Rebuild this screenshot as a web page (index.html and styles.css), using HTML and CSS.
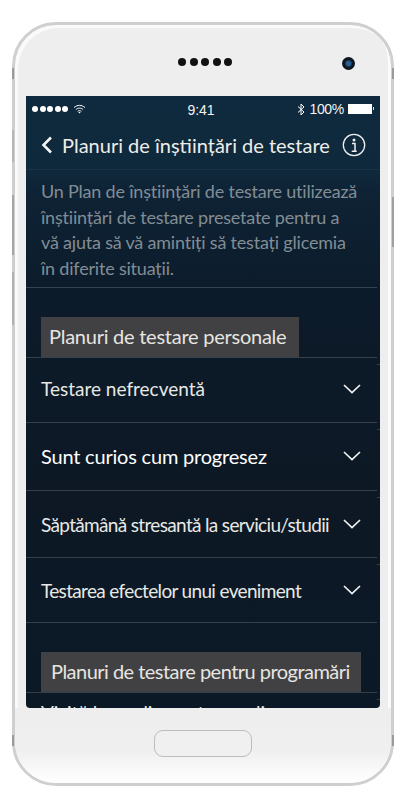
FILE: index.html
```html
<!DOCTYPE html>
<html lang="ro">
<head>
<meta charset="utf-8">
<title>Planuri de înștiințări de testare</title>
<link rel="stylesheet" href="styles.css">
</head>
<body>
<div class="phone">
  <span class="side side-l1"></span><span class="side side-r1"></span>
  <span class="side side-l2"></span><span class="side side-l3"></span><span class="side side-l4"></span>
  <span class="side side-r2"></span>
  <span class="side side-l5"></span><span class="side side-r5"></span>
  <div class="top-bezel">
    <div class="speaker"><i></i><i></i><i></i><i></i><i></i></div>
    <div class="camera"></div>
  </div>
  <div class="screen">
    <div class="status">
      <div class="status-left">
        <span class="signal"><i></i><i></i><i></i><i></i><i></i></span>
        <svg class="wifi" width="13" height="10" viewBox="0 0 13 10"><path d="M1 3.600C4.400.6 8.600.6 12 3.600M2.900 5.600c2.300-2 4.900-2 7.200 0M4.700 7.400c1.200-1 2.400-1 3.600 0" fill="none" stroke="#fff" stroke-width="1"/><path d="M5.400 8.300c.7-.5 1.500-.5 2.200 0L6.500 9.600z" fill="#fff"/></svg>
      </div>
      <div class="status-time">9:41</div>
      <div class="status-right">
        <svg class="bt" width="8" height="13" viewBox="0 0 8 13"><path d="M1 3.500l6 5.500-3 3V1l3 3-6 5.500" fill="none" stroke="#fff" stroke-width="1"/></svg>
        <span>100%</span>
        <span class="battery"></span>
      </div>
    </div>
    <div class="nav">
      <svg class="back" width="12" height="18" viewBox="0 0 12 18"><path d="M10 1.500L2.500 9l7.500 7.500" fill="none" stroke="#f4f4f2" stroke-width="2.600"/></svg>
      <h1 class="title">Planuri de înștiințări de testare</h1>
      <svg class="info" width="24" height="24" viewBox="0 0 24 24"><circle cx="12" cy="12" r="10.700" fill="none" stroke="#eef0f0" stroke-width="1.300"/><path d="M10 10.500h3v7.500M9.700 18.300h5" fill="none" stroke="#eef0f0" stroke-width="1.500"/><circle cx="12" cy="7" r="1.500" fill="#eef0f0"/></svg>
    </div>
    <p class="intro">Un Plan de înștiințări de testare utilizează înștiințări de testare presetate pentru a vă ajuta să vă amintiți să testați glicemia în diferite situații.</p>
    <div class="section section-first"><span class="section-label label-personal">Planuri de testare personale</span></div>
    <div class="row row-a"><span class="row-text">Testare nefrecventă</span><svg class="chev" width="18" height="10" viewBox="0 0 18 10"><path d="M1 1l8 7.500L17 1" fill="none" stroke="#f0f2f2" stroke-width="1.700"/></svg></div>
    <div class="row row-b"><span class="row-text row-strong">Sunt curios cum progresez</span><svg class="chev" width="18" height="10" viewBox="0 0 18 10"><path d="M1 1l8 7.500L17 1" fill="none" stroke="#f0f2f2" stroke-width="1.700"/></svg></div>
    <div class="row row-c"><span class="row-text row-tight">Săptămână stresantă la serviciu/studii</span><svg class="chev" width="18" height="10" viewBox="0 0 18 10"><path d="M1 1l8 7.500L17 1" fill="none" stroke="#f0f2f2" stroke-width="1.700"/></svg></div>
    <div class="row row-d"><span class="row-text row-tight">Testarea efectelor unui eveniment</span><svg class="chev" width="18" height="10" viewBox="0 0 18 10"><path d="M1 1l8 7.500L17 1" fill="none" stroke="#f0f2f2" stroke-width="1.700"/></svg></div>
    <div class="section section-second"><span class="section-label label-prog">Planuri de testare pentru programări</span></div>
    <div class="row row-cut"><span class="row-text">Vizită la medic pentru analize</span></div>
  </div>
  <div class="bottom-bezel"><div class="home"></div></div>
</div>
</body>
</html>
```
FILE: styles.css
```css
* { box-sizing: border-box; }
html, body { margin: 0; padding: 0; background: #fff; }
body { width: 405px; height: 800px; overflow: hidden; font-family: Lato, "Noto Sans", sans-serif; }

.phone {
  position: relative;
  width: 382px;
  height: 764px;
  margin: 22px 0 0 12px;
  border: 3px solid #cfcfcf;
  border-radius: 44px;
  background: #eeeeee;
  display: flex;
  flex-direction: column;
  align-items: flex-start;
  box-shadow: inset 3px 3px 0 #fafafa, inset -3px -4px 0 #fbfbfb;
}

.side { position: absolute; background: #9a9a9a; width: 2px; }
.side-l1 { left: -3px; top: 43px; height: 11px; }
.side-r1 { right: -3px; top: 43px; height: 11px; }
.side-l5 { left: -3px; top: 710px; height: 11px; }
.side-r5 { right: -3px; top: 710px; height: 11px; }
.side-l2 { left: -3px; top: 105px; height: 32px; background: #b5b5b5; }
.side-l3 { left: -3px; top: 170px; height: 60px; background: #a5a5a5; }
.side-l4 { left: -3px; top: 247px; height: 53px; background: #b0b0b0; }
.side-r2 { right: -3px; top: 172px; height: 50px; background: #a0a0a0; }

.top-bezel {
  position: relative;
  width: 100%;
  height: 71px;
  flex: none;
}
.speaker { position: absolute; left: 163px; top: 33px; display: flex; gap: 3.500px; }
.speaker i { display: block; width: 8px; height: 8px; border-radius: 50%; background: #111; }
.camera {
  position: absolute; left: 327px; top: 32px;
  width: 13px; height: 13px; border-radius: 50%;
  background: radial-gradient(circle at 50% 50%, #2b5f92 0 2px, #0c1620 4px);
}

.screen {
  flex: none;
  width: 354px;
  height: 612px;
  margin-left: 11px;
  overflow: hidden;
  color: #fff;
  background: linear-gradient(180deg, #0f2a3e 0, #0f293c 74px, #0e2335 95px, #0c1b2a 200px, #0d1824 400px, #0b1927 100%);
  border-radius: 0 0 4px 4px;
}

.status {
  height: 26px;
  display: grid;
  grid-template-columns: 1fr auto 1fr;
  align-items: center;
  padding: 0 10px 0 6px;
  font-family: "Liberation Sans", Arial, sans-serif;
  font-size: 14px;
  color: #f2f2f2;
}
.status-left { display: flex; align-items: center; gap: 5px; }
.signal { display: flex; gap: 1.500px; }
.signal i { display: block; width: 6px; height: 6px; border-radius: 50%; background: #fff; }
.status-time { padding-top: 1px; }
.status-right { display: flex; align-items: center; justify-content: flex-end; gap: 4px; }
.status-right span:first-of-type { letter-spacing: -.3px; }
.battery {
  position: relative;
  display: block;
  width: 24px;
  height: 10px;
  background: #fff;
  margin-right: -2px;
}
.battery::after {
  content: "";
  position: absolute;
  right: -2px; top: 3px;
  width: 1px; height: 3px;
  background: #ddd;
}

.nav {
  height: 48px;
  display: flex;
  align-items: center;
  padding: 0 14px 2px 15px;
  border-bottom: 1px solid #1c3346;
}
.back { flex: none; margin-right: 9px; }
.title {
  flex: 1;
  margin: 0;
  font-size: 20px;
  font-weight: 400;
  color: #eeede8;
  white-space: nowrap;
}
.info { flex: none; }

.intro {
  margin: 0;
  height: 118px;
  width: 351px;
  padding: 9px 18px 0 15px;
  font-size: 18px;
  letter-spacing: -.2px;
  line-height: 25.500px;
  color: #828d95;
  border-bottom: 1px solid #35434f;
}

.section { position: relative; display: flex; align-items: flex-end; padding-left: 15px; height: 69px; }
.section::after,
.row::after {
  content: "";
  position: absolute;
  right: -3px; top: 9px;
  width: 3px; height: 1px;
  background: #35404a;
}
.section-label {
  display: block;
  height: 40px;
  line-height: 39px;
  background: #414143;
  color: #e6e5e0;
  font-size: 20px;
  white-space: nowrap;
}
.label-personal { width: 258px; padding-left: 8px; letter-spacing: -.25px; }
.label-prog { width: 320px; padding-left: 10px; letter-spacing: -.53px; }

.row {
  position: relative;
  width: 351px;
  display: flex;
  align-items: center;
  justify-content: space-between;
  padding: 0 16px 0 15px;
  border-top: 1px solid #35404a;
}
.row::after { top: 6px; }
.row-a { height: 65px; padding-bottom: 3px; }
.row-b { height: 68px; padding-bottom: 2px; }
.row-c { height: 67px; }
.row-d { height: 66px; border-bottom: 1px solid #35404a; }
.row-cut { height: 40px; align-items: flex-start; padding-top: 8px; }
.row-text { font-size: 19px; color: #e8e8e4; white-space: nowrap; }
.row-tight { letter-spacing: -.66px; }
.row-strong { font-size: 20px; color: #fff; letter-spacing: -.2px; }
.chev { flex: none; }

.bottom-bezel {
  flex: 1;
  width: 100%;
  display: flex;
  justify-content: center;
  padding-top: 22px;
  border-radius: 0 0 41px 41px;
  background: linear-gradient(180deg, #eeeeee 0, #efefef 55%, #ffffff 100%);
}
.home {
  width: 98px;
  height: 27px;
  border: 1.500px solid #bdbdbd;
  border-radius: 9px;
  background: #f0f0f0;
}
```
